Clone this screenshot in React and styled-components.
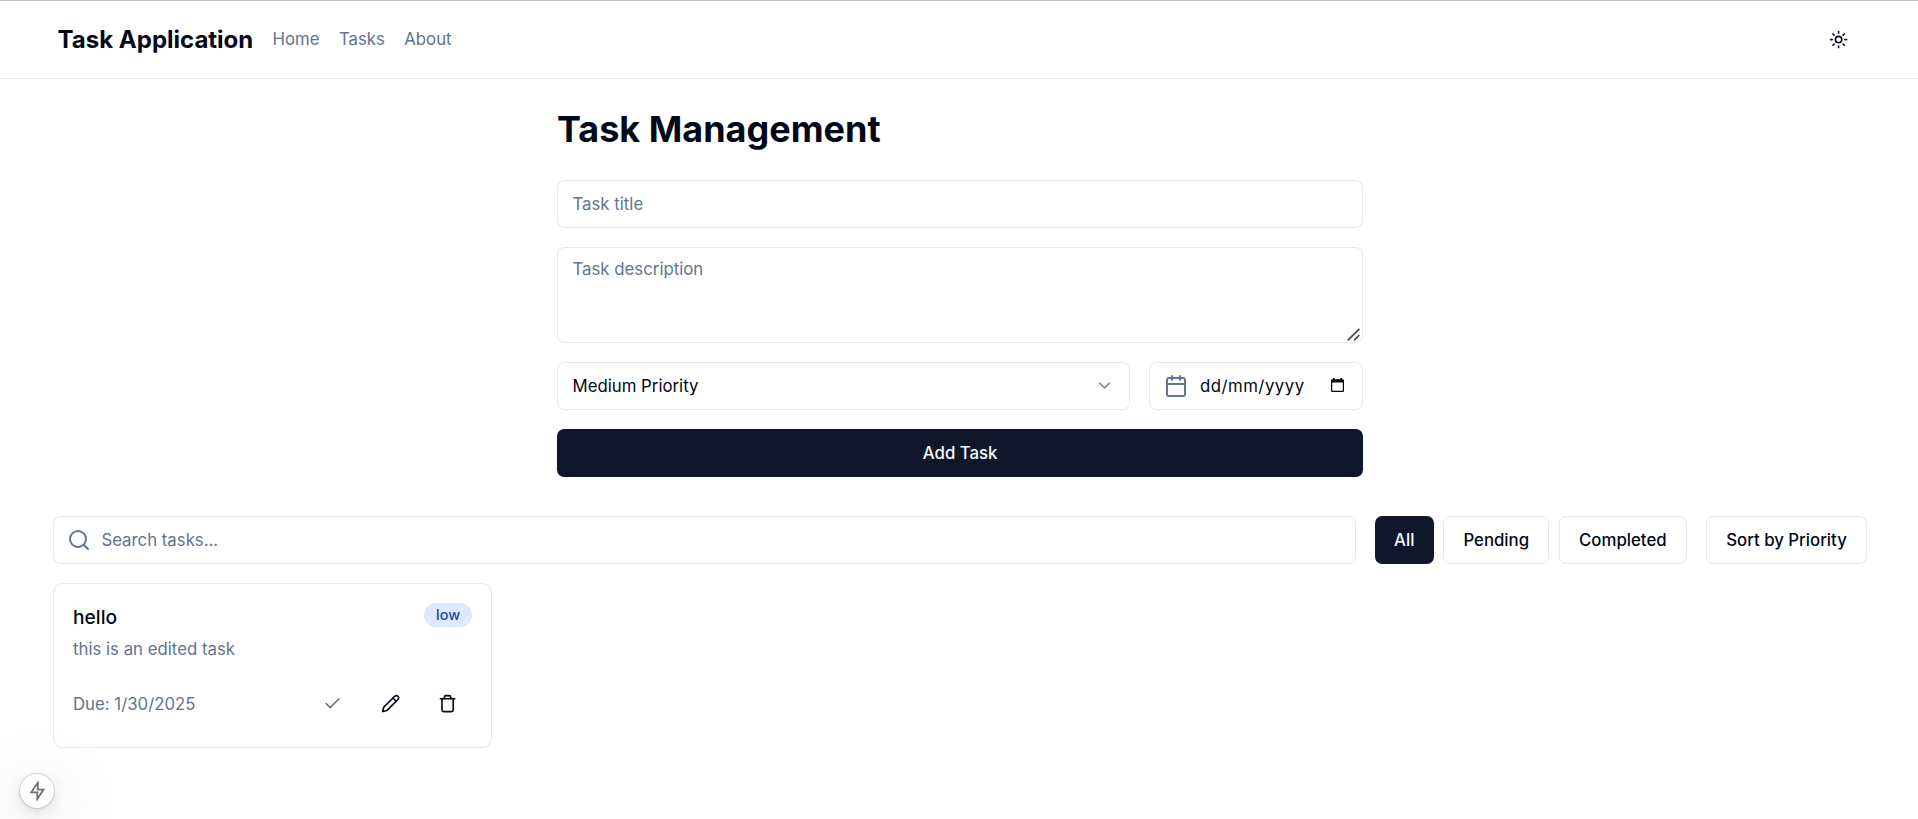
import React from "react";
import styled, { createGlobalStyle } from "styled-components";
import { Calendar, Check, ChevronDown, Pencil, Search, Sun, Trash } from "lucide-react";

const ink = "#020817";
const navy = "#0f172a";
const muted = "#64748b";
const line = "#e2e8f0";

const GlobalStyle = createGlobalStyle`
  *, *::before, *::after { box-sizing: border-box; }
  body {
    margin: 0;
    background: #fff;
    color: ${ink};
    font-family: Inter, "Liberation Sans", sans-serif;
    font-size: 16.8px;
    line-height: 24px;
  }
  h1, h2, p { margin: 0; }
  svg { display: block; flex: none; }
`;

const Page = styled.div`
  height: 819px;
  overflow: hidden;
  border-top: 1px solid #c6c6c6;
`;

const Header = styled.header`
  height: 78px;
  border-bottom: 1px solid ${line};
  display: flex;
  align-items: center;
  padding: 0 55.2px 0 57.6px;
`;

const Brand = styled.div`
  font-size: 24px;
  font-weight: 700;
  line-height: 33.6px;
`;

const Nav = styled.nav`
  display: flex;
  gap: 19.4px;
  margin-left: 19.2px;
  padding-bottom: 1.2px;
  flex: 1;
`;

const NavLink = styled.a`
  color: ${muted};
`;

const IconButton = styled.button`
  width: 48px;
  height: 48px;
  padding: 0;
  border: 0;
  background: transparent;
  color: ${(p) => (p.$faded ? muted : ink)};
  display: flex;
  align-items: center;
  justify-content: center;
`;

const Main = styled.main`
  padding: 28.6px 51px 0 53.2px;
`;

const TaskForm = styled.form`
  width: 806.4px;
  margin: 0 auto 38.4px;
  display: flex;
  flex-direction: column;
  gap: 19.2px;
`;

const Heading = styled.h1`
  font-size: 36px;
  line-height: 43.2px;
  font-weight: 700;
  margin-bottom: 9.6px;
`;

const Field = styled.div`
  height: ${(p) => (p.$tall ? 96 : 48)}px;
  width: ${(p) => (p.$width ? `${p.$width}px` : "auto")};
  flex: ${(p) => (p.$grow ? "1" : "none")};
  border: 1px solid ${line};
  border-radius: 7.2px;
  padding: ${(p) => (p.$tall ? "9.6px" : "0")} 14.6px;
  padding-left: ${(p) => p.$inset || 14.6}px;
  display: flex;
  align-items: ${(p) => (p.$tall ? "flex-start" : "center")};
  gap: ${(p) => p.$gap || 0}px;
  position: relative;
  color: ${(p) => (p.$filled ? ink : muted)};
`;

const FieldText = styled.span`
  flex: 1;
  white-space: nowrap;
  letter-spacing: ${(p) => p.$spacing || "normal"};
`;

const Resizer = styled.svg`
  position: absolute;
  right: 2px;
  bottom: 1px;
`;

const Row = styled.div`
  display: flex;
  gap: 19.2px;
`;

const Chevron = styled(ChevronDown)`
  opacity: 0.5;
`;

const FormIcon = styled.span`
  color: ${muted};
  display: flex;
`;

const PickerIcon = styled.svg`
  margin-right: 4px;
  margin-bottom: 1px;
`;

const Button = styled.button`
  height: 48px;
  padding: 0 19.2px;
  border-radius: 7.2px;
  border: ${(p) => (p.$solid ? "0" : `1px solid ${line}`)};
  background: ${(p) => (p.$solid ? navy : "#fff")};
  color: ${(p) => (p.$solid ? "#f8fafc" : ink)};
  font: 500 16.8px/24px Inter, "Liberation Sans", sans-serif;
  white-space: nowrap;
`;

const Filters = styled.div`
  display: flex;
  gap: 9.6px;
`;

const Grid = styled.section`
  display: grid;
  grid-template-columns: repeat(4, 1fr);
  gap: 19.2px;
  margin-top: 19.2px;
`;

const Card = styled.article`
  height: 165.2px;
  border: 1px solid ${line};
  border-radius: 9.6px;
  padding: 19.2px;
  padding-left: 18.8px;
  display: flex;
  flex-direction: column;
  justify-content: space-between;
`;

const CardTop = styled.div`
  display: flex;
  justify-content: space-between;
  align-items: flex-start;
`;

const TaskTitle = styled.h2`
  font-size: 19.2px;
  line-height: 28.8px;
  font-weight: 500;
`;

const Description = styled.p`
  color: ${muted};
  margin-top: 4.8px;
`;

const Badge = styled.span`
  background: #dbeafe;
  color: #1e40af;
  font-size: 14.4px;
  line-height: 19.2px;
  font-weight: 500;
  padding: 2.4px 12px;
  border-radius: 12px;
`;

const CardBottom = styled.div`
  display: flex;
  justify-content: space-between;
  align-items: center;
  color: ${muted};
`;

const DueDate = styled.span`
  padding-top: 0.6px;
`;

const DevBadge = styled.div`
  position: fixed;
  left: 20px;
  bottom: 11px;
  width: 34px;
  height: 34px;
  border-radius: 50%;
  background: #fff;
  display: flex;
  align-items: center;
  justify-content: center;
  box-shadow: 0 0 0 1px rgba(0, 0, 0, 0.13), 0 2px 4px rgba(0, 0, 0, 0.06),
    0 5px 18px rgba(0, 0, 0, 0.12), 0 14px 76px rgba(0, 0, 0, 0.22);
`;

export default function App() {
  return (
    <Page>
      <GlobalStyle />
      <Header>
        <Brand>Task Application</Brand>
        <Nav>
          <NavLink>Home</NavLink>
          <NavLink>Tasks</NavLink>
          <NavLink>About</NavLink>
        </Nav>
        <IconButton aria-label="Theme"><Sun size={19.2} /></IconButton>
      </Header>
      <Main>
        <TaskForm>
          <Heading>Task Management</Heading>
          <Field><FieldText>Task title</FieldText></Field>
          <Field $tall>
            <FieldText>Task description</FieldText>
            <Resizer width="13" height="13" viewBox="0 0 13 13" fill="none" stroke="#4a4a4a" strokeWidth="1.7">
              <path d="M0.8 12.4 12.4 0.8M7 12.4 12.4 7" />
            </Resizer>
          </Field>
          <Row>
            <Field $grow $filled>
              <FieldText>Medium Priority</FieldText>
              <Chevron size={19.2} />
            </Field>
            <Field $width={214} $inset={13.6} $gap={12} $filled>
              <FormIcon><Calendar size={24} /></FormIcon>
              <FieldText $spacing="0.5px">dd/mm/yyyy</FieldText>
              <PickerIcon width="13" height="14" viewBox="0 0 13 14">
                <path fill="#000" fillRule="evenodd" d="M1.3 1.2H2V0h1.6v1.2h5.8V0H11v1.2h.7Q13 1.2 13 2.5v10.2Q13 14 11.7 14H1.3Q0 14 0 12.7V2.5Q0 1.2 1.3 1.2ZM1.2 4.6v8.2h10.6V4.6Z" />
              </PickerIcon>
            </Field>
          </Row>
          <Button type="button" $solid>Add Task</Button>
        </TaskForm>
        <Row>
          <Field $grow $inset={12.8} $gap={10.4}>
            <Search size={24} />
            <FieldText>Search tasks...</FieldText>
          </Field>
          <Filters>
            <Button $solid>All</Button>
            <Button>Pending</Button>
            <Button>Completed</Button>
          </Filters>
          <Button>Sort by Priority</Button>
        </Row>
        <Grid>
          <Card>
            <CardTop>
              <div>
                <TaskTitle>hello</TaskTitle>
                <Description>this is an edited task</Description>
              </div>
              <Badge>low</Badge>
            </CardTop>
            <CardBottom>
              <DueDate>Due: 1/30/2025</DueDate>
              <Filters>
                <IconButton $faded aria-label="Complete"><Check size={19.2} /></IconButton>
                <IconButton aria-label="Edit"><Pencil size={19.2} /></IconButton>
                <IconButton aria-label="Delete"><Trash size={19.2} /></IconButton>
              </Filters>
            </CardBottom>
          </Card>
        </Grid>
      </Main>
      <DevBadge>
        <svg width="20" height="20" viewBox="0 0 20 20" fill="none" stroke="#707070" strokeWidth="1.8">
          <path d="M10.8 1.8 4.2 11.3H10.3V18L16.5 8.6H10.8Z" />
        </svg>
      </DevBadge>
    </Page>
  );
}
